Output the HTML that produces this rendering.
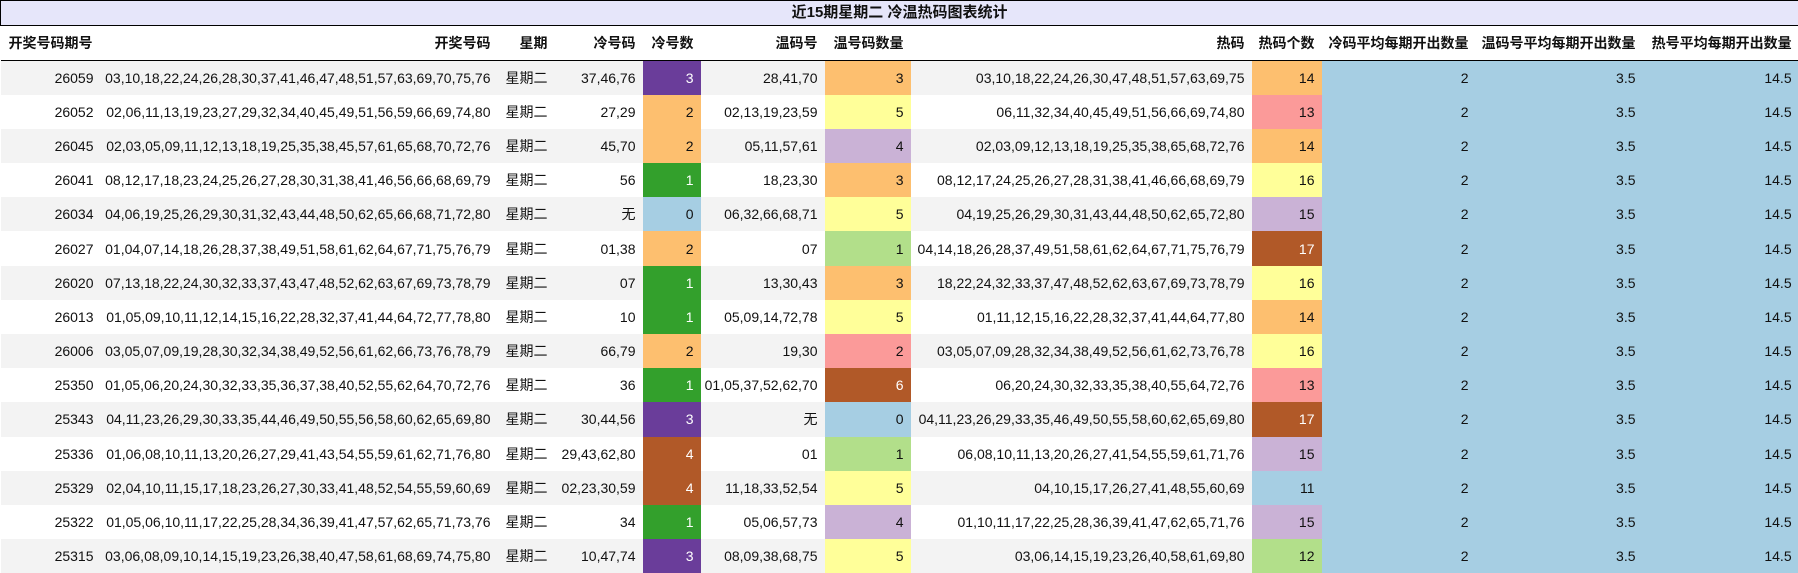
<!DOCTYPE html>
<html><head><meta charset="utf-8"><style>
*{margin:0;padding:0;box-sizing:border-box}
body{width:1798px;height:573px;background:#fff;font-family:"Liberation Sans","Noto Sans CJK SC",sans-serif;font-size:14px;line-height:16px;color:#111;overflow:hidden}
table{border-collapse:collapse;table-layout:fixed;width:1798px}
td,th{text-align:right;padding:0 7px 0 2px;white-space:nowrap;overflow:hidden;line-height:16px}
.t td{height:25px;background:#e6e6fa;border:1px solid #000;text-align:center;font-weight:bold;font-size:15px;padding:0}
.h th{height:35px;font-weight:bold;border-bottom:1px solid #000;font-size:14px}
.h th:first-child{text-align:left;padding-left:8px}
tbody td{height:34.2px}
tbody tr:nth-child(odd){background:#f3f3f3}
tbody tr:nth-child(even){background:#fff}
.w{color:#fff}
.a{background:#a6cee3}
</style></head><body>
<table>
<colgroup><col style="width:100px"><col style="width:397px"><col style="width:57px"><col style="width:88px"><col style="width:58px"><col style="width:124px"><col style="width:86px"><col style="width:341px"><col style="width:70px"><col style="width:154px"><col style="width:167px"><col style="width:156px"></colgroup>
<tr class="t"><td colspan="12">近15期星期二 冷温热码图表统计</td></tr>
<tr class="h"><th>开奖号码期号</th><th>开奖号码</th><th>星期</th><th>冷号码</th><th>冷号数</th><th>温码号</th><th>温号码数量</th><th>热码</th><th>热码个数</th><th>冷码平均每期开出数量</th><th>温码号平均每期开出数量</th><th>热号平均每期开出数量</th></tr>
<tbody>
<tr><td>26059</td><td>03,10,18,22,24,26,28,30,37,41,46,47,48,51,57,63,69,70,75,76</td><td>星期二</td><td>37,46,76</td><td class="w" style="background:#6a3d9a">3</td><td>28,41,70</td><td style="background:#fdbf6f">3</td><td>03,10,18,22,24,26,30,47,48,51,57,63,69,75</td><td style="background:#fdbf6f">14</td><td class="a">2</td><td class="a">3.5</td><td class="a">14.5</td></tr>
<tr><td>26052</td><td>02,06,11,13,19,23,27,29,32,34,40,45,49,51,56,59,66,69,74,80</td><td>星期二</td><td>27,29</td><td style="background:#fdbf6f">2</td><td>02,13,19,23,59</td><td style="background:#ffff99">5</td><td>06,11,32,34,40,45,49,51,56,66,69,74,80</td><td style="background:#fb9a99">13</td><td class="a">2</td><td class="a">3.5</td><td class="a">14.5</td></tr>
<tr><td>26045</td><td>02,03,05,09,11,12,13,18,19,25,35,38,45,57,61,65,68,70,72,76</td><td>星期二</td><td>45,70</td><td style="background:#fdbf6f">2</td><td>05,11,57,61</td><td style="background:#cab2d6">4</td><td>02,03,09,12,13,18,19,25,35,38,65,68,72,76</td><td style="background:#fdbf6f">14</td><td class="a">2</td><td class="a">3.5</td><td class="a">14.5</td></tr>
<tr><td>26041</td><td>08,12,17,18,23,24,25,26,27,28,30,31,38,41,46,56,66,68,69,79</td><td>星期二</td><td>56</td><td class="w" style="background:#33a02c">1</td><td>18,23,30</td><td style="background:#fdbf6f">3</td><td>08,12,17,24,25,26,27,28,31,38,41,46,66,68,69,79</td><td style="background:#ffff99">16</td><td class="a">2</td><td class="a">3.5</td><td class="a">14.5</td></tr>
<tr><td>26034</td><td>04,06,19,25,26,29,30,31,32,43,44,48,50,62,65,66,68,71,72,80</td><td>星期二</td><td>无</td><td style="background:#a6cee3">0</td><td>06,32,66,68,71</td><td style="background:#ffff99">5</td><td>04,19,25,26,29,30,31,43,44,48,50,62,65,72,80</td><td style="background:#cab2d6">15</td><td class="a">2</td><td class="a">3.5</td><td class="a">14.5</td></tr>
<tr><td>26027</td><td>01,04,07,14,18,26,28,37,38,49,51,58,61,62,64,67,71,75,76,79</td><td>星期二</td><td>01,38</td><td style="background:#fdbf6f">2</td><td>07</td><td style="background:#b2df8a">1</td><td>04,14,18,26,28,37,49,51,58,61,62,64,67,71,75,76,79</td><td class="w" style="background:#b15928">17</td><td class="a">2</td><td class="a">3.5</td><td class="a">14.5</td></tr>
<tr><td>26020</td><td>07,13,18,22,24,30,32,33,37,43,47,48,52,62,63,67,69,73,78,79</td><td>星期二</td><td>07</td><td class="w" style="background:#33a02c">1</td><td>13,30,43</td><td style="background:#fdbf6f">3</td><td>18,22,24,32,33,37,47,48,52,62,63,67,69,73,78,79</td><td style="background:#ffff99">16</td><td class="a">2</td><td class="a">3.5</td><td class="a">14.5</td></tr>
<tr><td>26013</td><td>01,05,09,10,11,12,14,15,16,22,28,32,37,41,44,64,72,77,78,80</td><td>星期二</td><td>10</td><td class="w" style="background:#33a02c">1</td><td>05,09,14,72,78</td><td style="background:#ffff99">5</td><td>01,11,12,15,16,22,28,32,37,41,44,64,77,80</td><td style="background:#fdbf6f">14</td><td class="a">2</td><td class="a">3.5</td><td class="a">14.5</td></tr>
<tr><td>26006</td><td>03,05,07,09,19,28,30,32,34,38,49,52,56,61,62,66,73,76,78,79</td><td>星期二</td><td>66,79</td><td style="background:#fdbf6f">2</td><td>19,30</td><td style="background:#fb9a99">2</td><td>03,05,07,09,28,32,34,38,49,52,56,61,62,73,76,78</td><td style="background:#ffff99">16</td><td class="a">2</td><td class="a">3.5</td><td class="a">14.5</td></tr>
<tr><td>25350</td><td>01,05,06,20,24,30,32,33,35,36,37,38,40,52,55,62,64,70,72,76</td><td>星期二</td><td>36</td><td class="w" style="background:#33a02c">1</td><td>01,05,37,52,62,70</td><td class="w" style="background:#b15928">6</td><td>06,20,24,30,32,33,35,38,40,55,64,72,76</td><td style="background:#fb9a99">13</td><td class="a">2</td><td class="a">3.5</td><td class="a">14.5</td></tr>
<tr><td>25343</td><td>04,11,23,26,29,30,33,35,44,46,49,50,55,56,58,60,62,65,69,80</td><td>星期二</td><td>30,44,56</td><td class="w" style="background:#6a3d9a">3</td><td>无</td><td style="background:#a6cee3">0</td><td>04,11,23,26,29,33,35,46,49,50,55,58,60,62,65,69,80</td><td class="w" style="background:#b15928">17</td><td class="a">2</td><td class="a">3.5</td><td class="a">14.5</td></tr>
<tr><td>25336</td><td>01,06,08,10,11,13,20,26,27,29,41,43,54,55,59,61,62,71,76,80</td><td>星期二</td><td>29,43,62,80</td><td class="w" style="background:#b15928">4</td><td>01</td><td style="background:#b2df8a">1</td><td>06,08,10,11,13,20,26,27,41,54,55,59,61,71,76</td><td style="background:#cab2d6">15</td><td class="a">2</td><td class="a">3.5</td><td class="a">14.5</td></tr>
<tr><td>25329</td><td>02,04,10,11,15,17,18,23,26,27,30,33,41,48,52,54,55,59,60,69</td><td>星期二</td><td>02,23,30,59</td><td class="w" style="background:#b15928">4</td><td>11,18,33,52,54</td><td style="background:#ffff99">5</td><td>04,10,15,17,26,27,41,48,55,60,69</td><td style="background:#a6cee3">11</td><td class="a">2</td><td class="a">3.5</td><td class="a">14.5</td></tr>
<tr><td>25322</td><td>01,05,06,10,11,17,22,25,28,34,36,39,41,47,57,62,65,71,73,76</td><td>星期二</td><td>34</td><td class="w" style="background:#33a02c">1</td><td>05,06,57,73</td><td style="background:#cab2d6">4</td><td>01,10,11,17,22,25,28,36,39,41,47,62,65,71,76</td><td style="background:#cab2d6">15</td><td class="a">2</td><td class="a">3.5</td><td class="a">14.5</td></tr>
<tr><td>25315</td><td>03,06,08,09,10,14,15,19,23,26,38,40,47,58,61,68,69,74,75,80</td><td>星期二</td><td>10,47,74</td><td class="w" style="background:#6a3d9a">3</td><td>08,09,38,68,75</td><td style="background:#ffff99">5</td><td>03,06,14,15,19,23,26,40,58,61,69,80</td><td style="background:#b2df8a">12</td><td class="a">2</td><td class="a">3.5</td><td class="a">14.5</td></tr>
</tbody></table>
</body></html>
